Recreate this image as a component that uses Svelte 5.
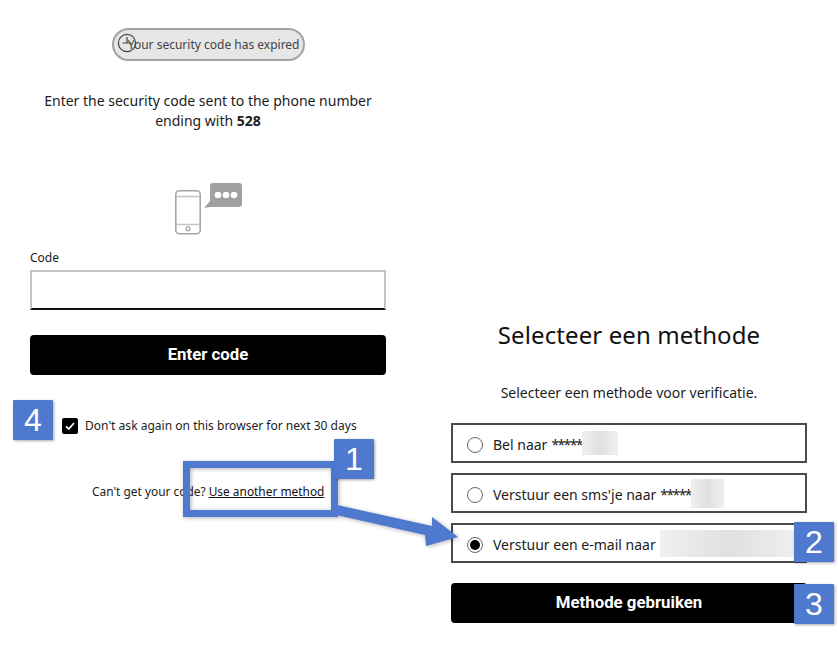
<script>
  const options = [
    { label: 'Bel naar', stars: '*****', blur: 36, h: 24, checked: false },
    { label: "Verstuur een sms'je naar", stars: '*****', blur: 33, h: 29, checked: false },
    { label: 'Verstuur een e-mail naar', stars: '', blur: 140, h: 27, checked: true }
  ];
</script>

<div class="page">
  <section class="left">
    <div class="pill">
      <svg class="clock" width="20" height="20" viewBox="0 0 20 20" fill="none" stroke="#444" stroke-width="1.2"><circle cx="10" cy="10" r="8.6"/><path d="M10 4V10M5.500 10H14"/></svg>
      <span>Your security code has expired</span>
    </div>
    <p class="intro">Enter the security code sent to the phone number ending with <b>528</b></p>
    <svg class="phone" width="70" height="54" viewBox="0 0 70 54" fill="none">
      <rect x="1.800" y="7.800" width="24.400" height="43" rx="3.500" stroke="#a6a6a6" stroke-width="1.600"/>
      <path d="M2.500 13.500H25.500M2.500 41.500H25.500" stroke="#c4c4c4" stroke-width="1.600"/>
      <circle cx="14" cy="45.700" r="2" stroke="#a6a6a6" stroke-width="1.200"/>
      <path d="M36 3a3 3 0 0 1 3-3h26a3 3 0 0 1 3 3v18a3 3 0 0 1-3 3H36L30 25l6-7z" fill="#a0a0a0"/>
      <circle cx="44" cy="12" r="3.300" fill="#fff"/><circle cx="52" cy="12" r="3.300" fill="#fff"/><circle cx="60" cy="12" r="3.300" fill="#fff"/>
    </svg>
    <label class="code-label" for="code">Code</label>
    <input id="code" class="code" type="text" />
    <button class="primary enter">Enter code</button>
    <div class="remember">
      <span class="check"><svg width="12" height="12" viewBox="0 0 12 12" fill="none" stroke="#fff" stroke-width="1.700"><path d="M2 6.500 4.800 9 10 3"/></svg></span>
      <span>Don't ask again on this browser for next 30 days</span>
    </div>
    <p class="alt">Can't get your code? <a href="#m">Use another method</a></p>
  </section>

  <section class="right">
    <h1>Selecteer een methode</h1>
    <p class="sub">Selecteer een methode voor verificatie.</p>
    <div class="options">
      {#each options as o}
        <div class="option">
          <span class="radio" class:on={o.checked}></span>
          <span class="opt-label">{o.label}</span>
          {#if o.stars}<span class="stars">{o.stars}</span>{/if}
          <span class="blur" class:spaced={!o.stars} style="width:{o.blur}px;height:{o.h}px"></span>
        </div>
      {/each}
    </div>
    <button class="primary use">Methode gebruiken</button>
  </section>

  <svg class="arrow" width="838" height="662" viewBox="0 0 838 662">
    <g class="shadowed">
      <rect x="186.500" y="464.500" width="148" height="49" fill="none" stroke="#4f78cf" stroke-width="7"/>
      <path d="M337 505 432 526 432 517 458 537 426 546 425 535 332 514z" fill="#4f78cf"/>
    </g>
  </svg>
  <div class="badge b1">1</div>
  <div class="badge b2">2</div>
  <div class="badge b3">3</div>
  <div class="badge b4">4</div>
</div>

<style>
  :global(body) { margin: 0; background: #fff; }
  .page {
    position: relative;
    width: 838px;
    height: 662px;
    display: flex;
    overflow: hidden;
    font-family: "Noto Sans", "Open Sans", sans-serif;
    font-size: 13px;
    color: #1c1c1c;
  }
  .left {
    width: 356px;
    margin-left: 30px;
    padding-top: 28px;
    display: flex;
    flex-direction: column;
  }
  .right {
    width: 356px;
    margin-left: 65px;
    padding-top: 319px;
    display: flex;
    flex-direction: column;
  }
  .pill {
    align-self: center;
    width: 193px;
    height: 33px;
    box-sizing: border-box;
    border: 2px solid #a3a3a3;
    border-radius: 17px;
    background: #e6e6e6;
    display: flex;
    align-items: center;
    justify-content: flex-end;
    padding-right: 3px;
    position: relative;
    font-size: 12px;
    color: #444;
    white-space: nowrap;
  }
  .clock { position: absolute; left: 3px; top: 3px; }
  .intro {
    margin: 30px 0 0;
    text-align: center;
    font-size: 14px;
    line-height: 20px;
    padding: 0 10px;
  }
  .phone { align-self: flex-start; margin: 52px 0 0 144px; }
  .code-label { margin-top: 13px; font-size: 12px; line-height: 16px; }
  .code {
    box-sizing: border-box;
    width: 356px;
    height: 40px;
    margin-top: 4px;
    border: 2px solid #c4c4c4;
    border-bottom: 2px solid #111;
    background: #fff;
    outline: none;
    padding: 0;
  }
  .primary {
    display: block;
    width: 356px;
    height: 40px;
    border: 0;
    border-radius: 4px;
    background: #000;
    color: #fff;
    font-family: Roboto, "Noto Sans", sans-serif;
    font-weight: 700;
    font-size: 16.800px;
    padding: 0 0 2px;
  }
  .enter { margin-top: 25px; }
  .remember {
    display: flex;
    align-items: center;
    gap: 7px;
    margin: 42px 0 0 32px;
    font-size: 12.050px;
    white-space: nowrap;
  }
  .check {
    width: 16px;
    height: 16px;
    border-radius: 2px;
    background: #000;
    display: flex;
    align-items: center;
    justify-content: center;
  }
  .alt {
    margin: 48px 0 0 62px;
    font-size: 11.900px;
    line-height: 18px;
    white-space: nowrap;
  }
  .alt a { color: #111; text-decoration: underline; }
  h1 {
    margin: 0;
    text-align: center;
    font-weight: 400;
    font-size: 24px;
    line-height: 32px;
    letter-spacing: 0.100px;
    color: #111;
  }
  .sub {
    margin: 32px 0 0;
    text-align: center;
    font-size: 14px;
    line-height: 20px;
  }
  .options {
    margin-top: 20px;
    display: flex;
    flex-direction: column;
    gap: 10px;
  }
  .option {
    box-sizing: border-box;
    height: 40px;
    border: 2px solid #4a4a4a;
    display: flex;
    align-items: center;
    padding: 3px 0 0 14px;
    font-size: 14px;
    white-space: nowrap;
  }
  .radio {
    width: 14px;
    height: 14px;
    border: 1px solid #666;
    border-radius: 50%;
    margin-right: 10px;
    position: relative;
    flex: none;
  }
  .radio.on::after {
    content: "";
    position: absolute;
    inset: 2px;
    border-radius: 50%;
    background: #000;
  }
  .stars {
    margin-left: 4px;
    letter-spacing: -1.600px;
  }
  .blur {
    margin-top: -3px;
    background: linear-gradient(90deg, #f0f0f0, #e0e0e0 50%, #f0f0f0);
  }
  .blur.spaced { margin-left: 4px; }
  .use { margin-top: 20px; }
  .arrow { position: absolute; left: 0; top: 0; pointer-events: none; }
  .shadowed { filter: drop-shadow(1px 1px 2px rgba(0, 0, 0, 0.3)); }
  .badge {
    position: absolute;
    width: 40px;
    height: 40px;
    background: #4f78cf;
    color: #fff;
    border-radius: 1px;
    box-shadow: 1px 1px 3px rgba(0, 0, 0, 0.35);
    font-family: "Liberation Sans", Arial, sans-serif;
    font-size: 32px;
    line-height: 40px;
    text-align: center;
  }
  .b1 { left: 334px; top: 439px; }
  .b2 { left: 794px; top: 522px; }
  .b3 { left: 794px; top: 584px; }
  .b4 { left: 13px; top: 400px; }
</style>
